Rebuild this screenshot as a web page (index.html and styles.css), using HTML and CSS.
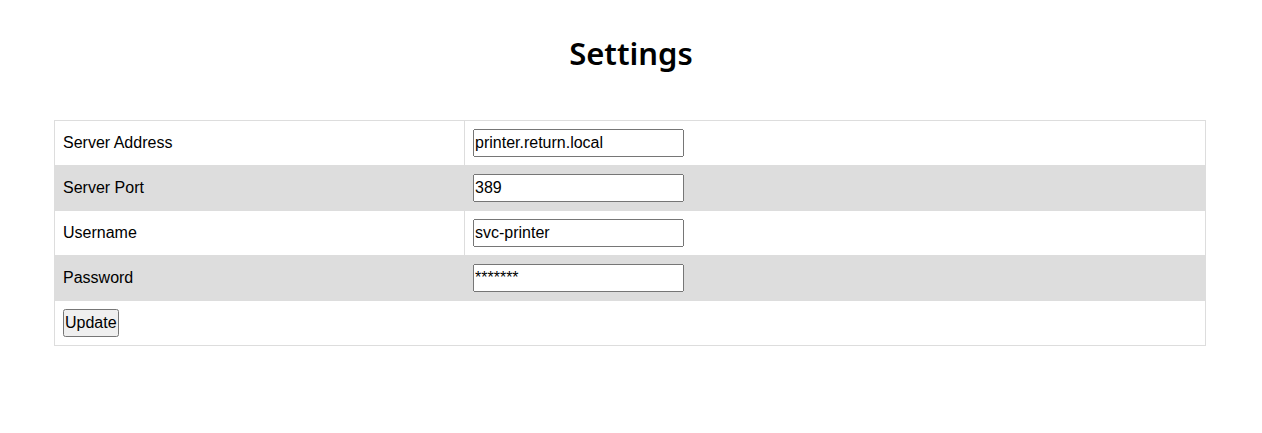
FILE: index.html
```html
<!DOCTYPE html>
<html>
<head>
<meta charset="utf-8">
<title>Settings</title>
<link rel="stylesheet" href="styles.css">
</head>
<body>
<h1 class="title">Settings</h1>
<form class="settings-form">
<table class="settings">
  <tr>
    <td class="label">Server Address</td>
    <td><input class="field" type="text" value="printer.return.local"></td>
  </tr>
  <tr class="alt">
    <td class="label">Server Port</td>
    <td><input class="field" type="text" value="389"></td>
  </tr>
  <tr>
    <td class="label">Username</td>
    <td><input class="field" type="text" value="svc-printer"></td>
  </tr>
  <tr class="alt">
    <td class="label">Password</td>
    <td><input class="field" type="text" value="*******"></td>
  </tr>
  <tr>
    <td colspan="2"><button class="btn" type="button">Update</button></td>
  </tr>
</table>
</form>
</body>
</html>
```

FILE: styles.css
```css
body {
  margin: 0;
  font-family: "Liberation Sans", Arial, sans-serif;
  font-size: 16px;
  color: #000;
  background: #fff;
}
.title {
  font-family: "Noto Sans", sans-serif;
  font-weight: 600;
  font-size: 31px;
  text-align: center;
  margin: 0;
  padding-top: 31px;
  height: 120px;
  line-height: 44px;
  box-sizing: border-box;
}
.settings-form {
  padding: 0 56px 0 54px;
}
.settings {
  width: 100%;
  border-collapse: collapse;
  border: 1px solid #ddd;
}
.settings td {
  border: 1px solid #ddd;
  padding: 8px;
  height: 28px;
  line-height: 18px;
  vertical-align: middle;
}
.settings td.label {
  width: 393px;
}
.settings tr.alt td {
  background: #ddd;
}
.field {
  font-family: "Liberation Sans", Arial, sans-serif;
  font-size: 16px;
  width: 211px;
  height: 28px;
  box-sizing: border-box;
  padding: 1px 1px 1px 0;
  margin: 0;
  display: block;
}
.btn {
  font-family: "Liberation Sans", Arial, sans-serif;
  font-size: 16px;
  height: 28px;
  padding: 1px 0;
  margin: 0;
  display: block;
}
```
